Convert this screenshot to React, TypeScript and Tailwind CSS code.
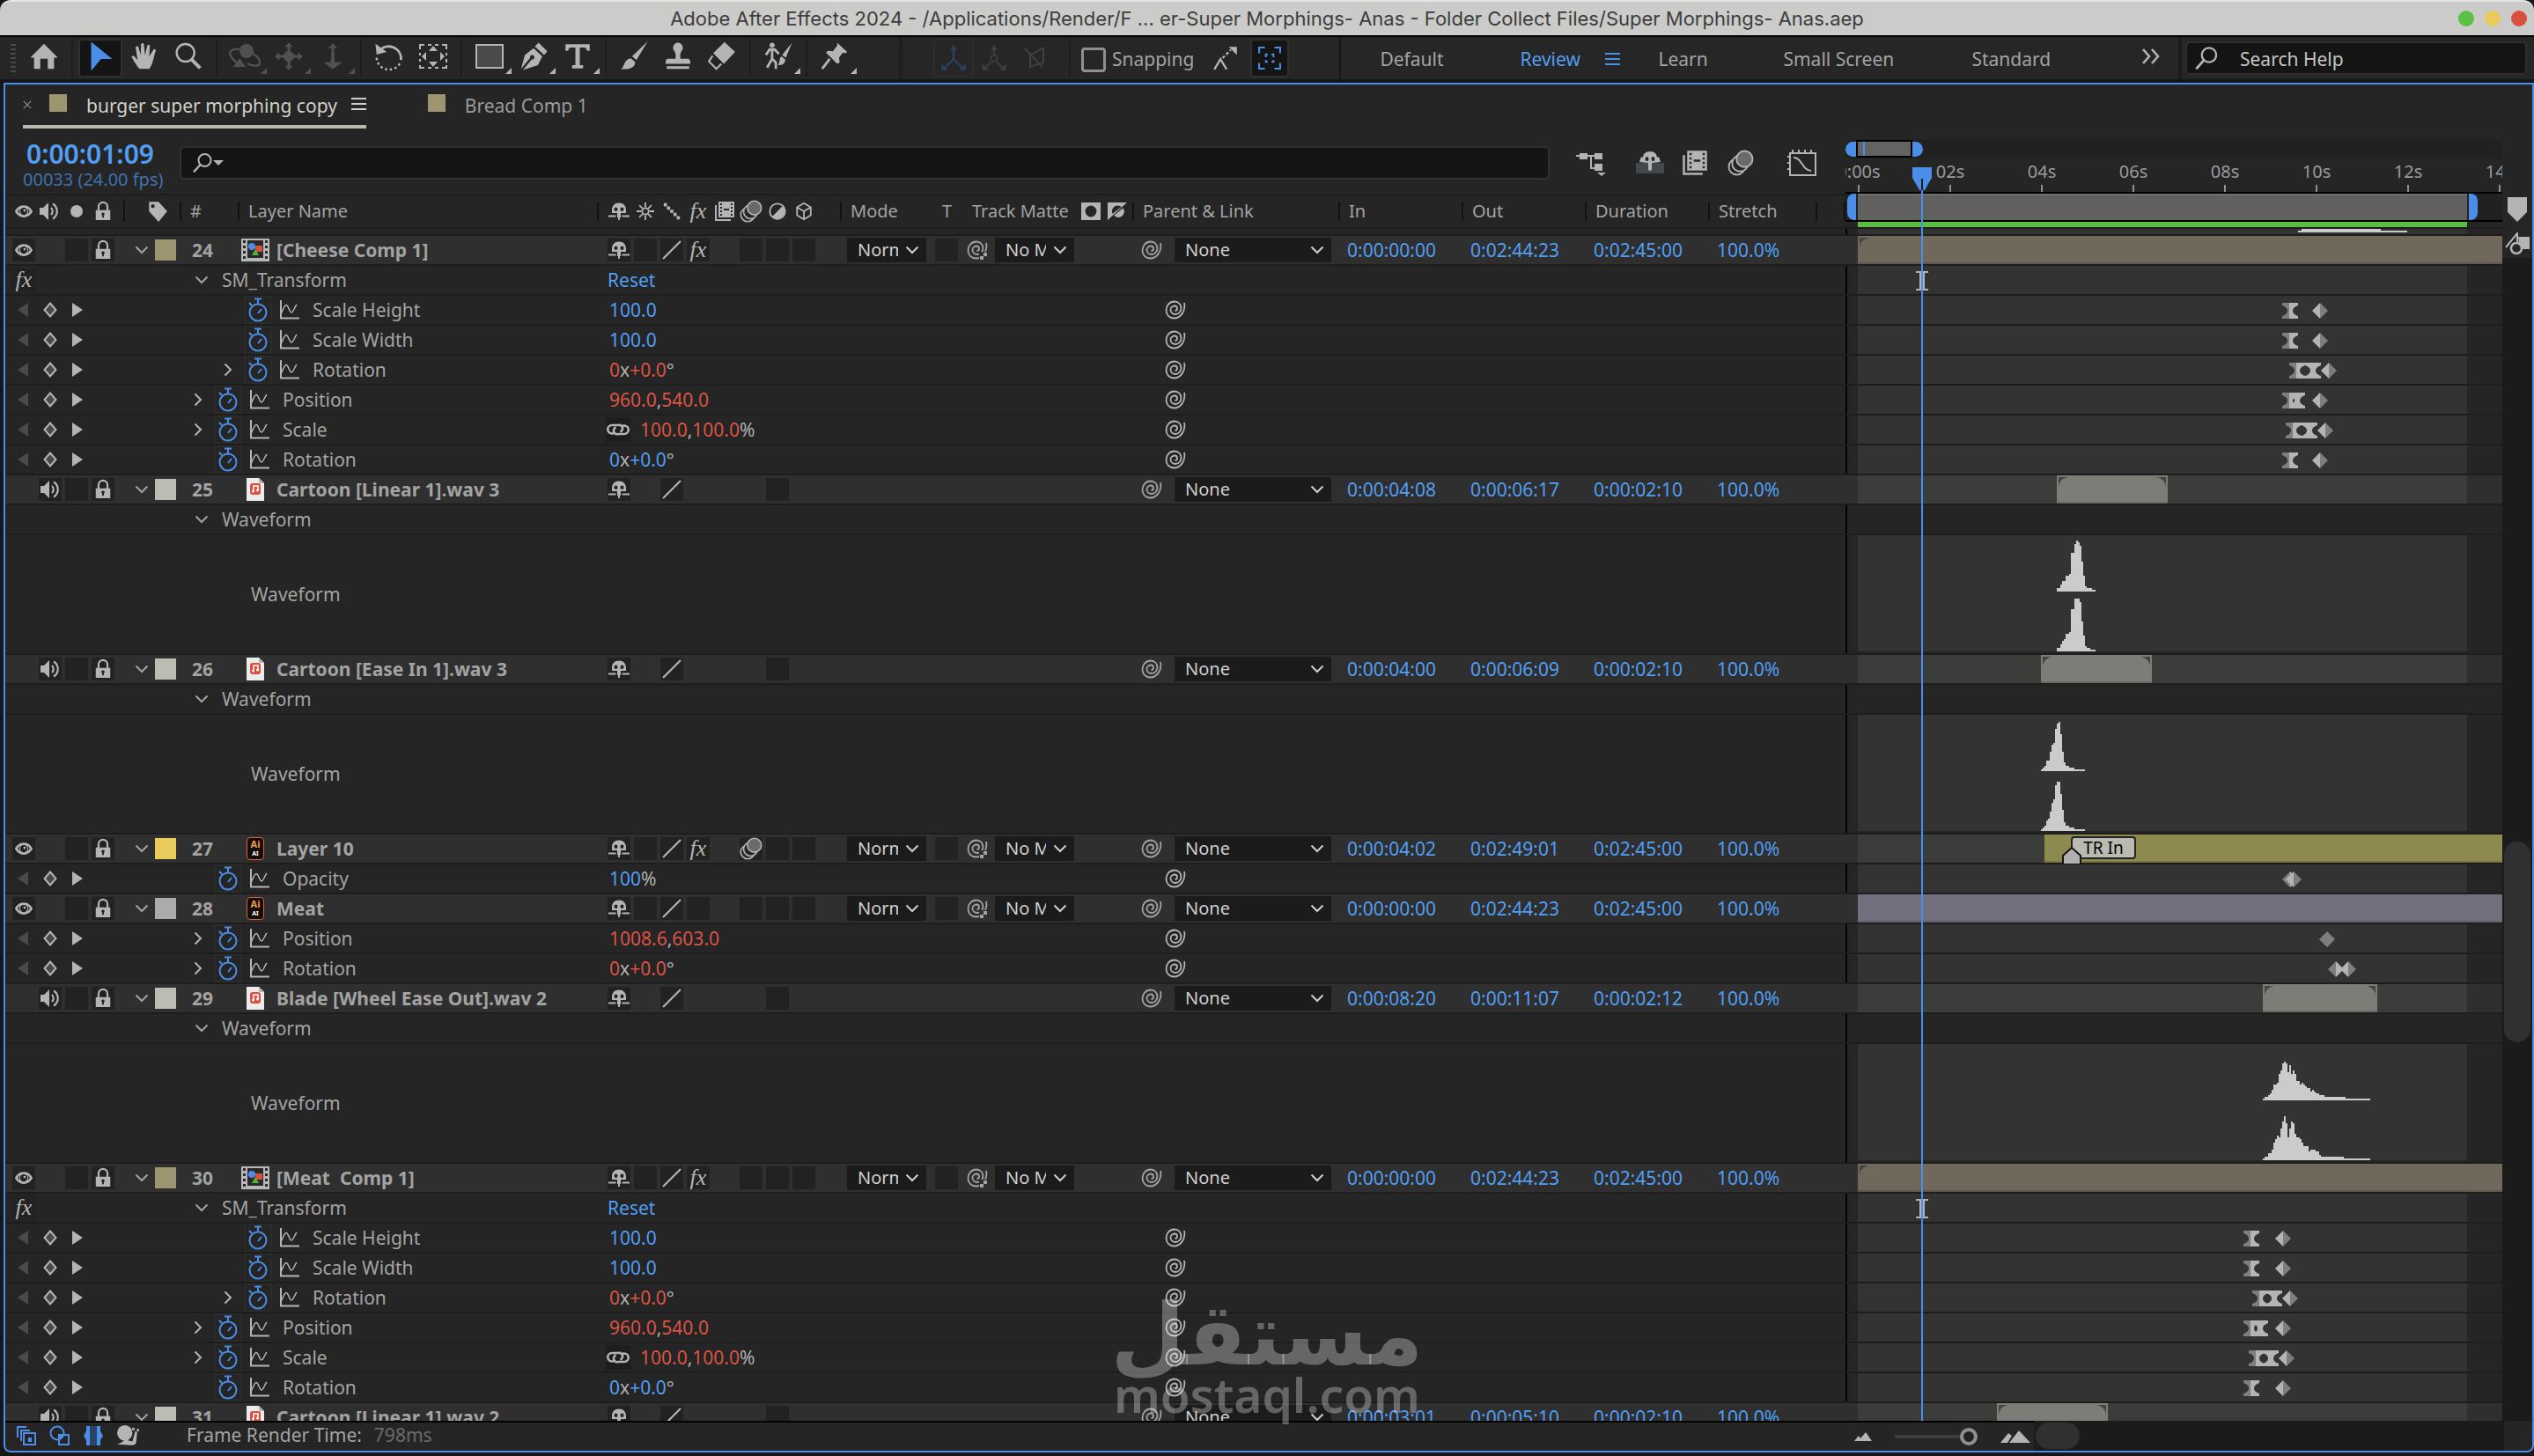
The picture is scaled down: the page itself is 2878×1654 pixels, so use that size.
import React, { useState } from "react";

type Key = { x: number; type: "glass" | "glassFull" | "in" | "out" | "dim" };

type Layer = {
  kind: "layer";
  num: number;
  name: string;
  icon: "comp" | "audio" | "ai";
  swatch: string;
  fx?: boolean;
  motion?: boolean;
  start: string;
  end: string;
  duration: string;
  bar: { x: number; w?: number; color: string; corner?: boolean };
  marker?: string;
};
type Group = { kind: "group"; name: string; reset?: boolean };
type Prop = {
  kind: "prop";
  name: string;
  deep?: boolean;
  open?: boolean;
  linked?: boolean;
  value: [string, string][];
  keys: Key[];
};
type Wave = { kind: "wave"; x: number; end: number; top: number[][]; bottom: number[][] };
type Row = Layer | Group | Prop | Wave;

const BLUE = "text-[#519ef2]";
const RED = "text-[#dc5444]";
const GREY = "text-[#b0b0b0]";

const transformProps = (glass: number, dia: number, k: number[][]): Row[] => [
  { kind: "group", name: "SM_Transform", reset: true },
  { kind: "prop", name: "Scale Height", deep: true, value: [["100.0", BLUE]], keys: [{ x: glass, type: "glass" }, { x: dia, type: "out" }] },
  { kind: "prop", name: "Scale Width", deep: true, value: [["100.0", BLUE]], keys: [{ x: glass, type: "glass" }, { x: dia, type: "out" }] },
  {
    kind: "prop",
    name: "Rotation",
    deep: true,
    open: true,
    value: [["0", RED], ["x", GREY], ["+0.0", RED], ["°", GREY]],
    keys: [{ x: k[0][0], type: "glass" }, { x: k[0][1], type: "glassFull" }, { x: k[0][2], type: "out" }],
  },
  {
    kind: "prop",
    name: "Position",
    open: true,
    value: [["960.0", RED], [",", GREY], ["540.0", RED]],
    keys: [{ x: glass, type: "glass" }, { x: k[1][0], type: "glassFull" }, { x: dia, type: "out" }],
  },
  {
    kind: "prop",
    name: "Scale",
    open: true,
    linked: true,
    value: [["100.0", RED], [",", GREY], ["100.0", RED], ["%", GREY]],
    keys: [{ x: k[2][0], type: "glass" }, { x: k[2][1], type: "glassFull" }, { x: k[2][2], type: "out" }],
  },
  {
    kind: "prop",
    name: "Rotation",
    value: [["0", BLUE], ["x", GREY], ["+0.0", BLUE], ["°", GREY]],
    keys: [{ x: glass, type: "glass" }, { x: dia, type: "out" }],
  },
];

// each pair is [x offset, peak height]
const hitA = [[0, 4], [4, 8], [6, 12], [10, 18], [14, 20], [16, 44], [20, 54], [22, 58], [24, 56], [26, 52], [28, 34], [30, 18], [32, 6], [34, 4], [40, 2]];
const hitA2 = [[0, 4], [4, 8], [6, 12], [8, 14], [10, 20], [14, 22], [16, 48], [20, 60], [26, 56], [28, 34], [30, 18], [32, 6], [34, 4], [38, 2]];
const hitB = [[0, 2], [2, 4], [4, 6], [6, 12], [10, 22], [12, 30], [14, 32], [16, 48], [18, 54], [20, 56], [22, 42], [24, 22], [26, 10], [28, 6], [32, 4], [38, 2]];
const hitB2 = [[0, 2], [2, 4], [4, 6], [6, 12], [8, 14], [10, 22], [12, 32], [14, 36], [16, 52], [18, 56], [22, 42], [24, 24], [26, 10], [28, 6], [32, 4], [38, 2]];
const blade = [[0, 2], [2, 4], [6, 6], [8, 8], [10, 12], [12, 18], [16, 20], [18, 30], [20, 34], [22, 42], [24, 44], [26, 42], [28, 32], [30, 40], [32, 30], [34, 34], [36, 30], [38, 22], [42, 18], [44, 20], [46, 18], [48, 16], [50, 14], [54, 10], [56, 12], [58, 10], [60, 8], [64, 6], [70, 4], [94, 2]];
const blade2 = [[0, 2], [2, 4], [6, 8], [10, 12], [12, 20], [14, 24], [16, 28], [18, 26], [20, 36], [22, 44], [24, 50], [26, 42], [28, 26], [30, 36], [32, 44], [34, 42], [36, 30], [38, 26], [42, 24], [44, 20], [46, 16], [52, 10], [54, 12], [60, 10], [64, 6], [66, 4], [92, 2]];

const rows: Row[] = [
  { kind: "layer", num: 24, name: "[Cheese Comp 1]", icon: "comp", swatch: "#9c9570", fx: true, start: "0:00:00:00", end: "0:02:44:23", duration: "0:02:45:00", bar: { x: 14, color: "#70685a", corner: true } },
  ...transformProps(496, 530, [[504, 522, 540], [504], [500, 518, 536]]),
  { kind: "layer", num: 25, name: "Cartoon [Linear 1].wav 3", icon: "audio", swatch: "#bbbdb3", start: "0:00:04:08", end: "0:00:06:17", duration: "0:00:02:10", bar: { x: 240, w: 126, color: "#7a7e77", corner: true } },
  { kind: "group", name: "Waveform" },
  { kind: "wave", x: 240, end: 44, top: hitA, bottom: hitA2 },
  { kind: "layer", num: 26, name: "Cartoon [Ease In 1].wav 3", icon: "audio", swatch: "#bbbdb3", start: "0:00:04:00", end: "0:00:06:09", duration: "0:00:02:10", bar: { x: 222, w: 126, color: "#7a7e77", corner: true } },
  { kind: "group", name: "Waveform" },
  { kind: "wave", x: 222, end: 50, top: hitB, bottom: hitB2 },
  { kind: "layer", num: 27, name: "Layer 10", icon: "ai", swatch: "#e8cb5a", fx: true, motion: true, start: "0:00:04:02", end: "0:02:49:01", duration: "0:02:45:00", bar: { x: 226, color: "#8e894f" }, marker: "TR In" },
  { kind: "prop", name: "Opacity", value: [["100", BLUE], ["%", GREY]], keys: [{ x: 496, type: "in" }, { x: 500, type: "out" }] },
  { kind: "layer", num: 28, name: "Meat", icon: "ai", swatch: "#ababab", start: "0:00:00:00", end: "0:02:44:23", duration: "0:02:45:00", bar: { x: 14, color: "#72707f" } },
  { kind: "prop", name: "Position", open: true, value: [["1008.6", RED], [",", GREY], ["603.0", RED]], keys: [{ x: 538, type: "dim" }] },
  { kind: "prop", name: "Rotation", open: true, value: [["0", RED], ["x", GREY], ["+0.0", RED], ["°", GREY]], keys: [{ x: 548, type: "in" }, { x: 562, type: "out" }] },
  { kind: "layer", num: 29, name: "Blade [Wheel Ease Out].wav 2", icon: "audio", swatch: "#bbbdb3", start: "0:00:08:20", end: "0:00:11:07", duration: "0:00:02:12", bar: { x: 474, w: 130, color: "#7a7e77", corner: true } },
  { kind: "group", name: "Waveform" },
  { kind: "wave", x: 474, end: 122, top: blade, bottom: blade2 },
  { kind: "layer", num: 30, name: "[Meat  Comp 1]", icon: "comp", swatch: "#9c9570", fx: true, start: "0:00:00:00", end: "0:02:44:23", duration: "0:02:45:00", bar: { x: 14, color: "#70685a", corner: true } },
  ...transformProps(452, 488, [[462, 478, 496], [462], [458, 474, 492]]),
  { kind: "layer", num: 31, name: "Cartoon [Linear 1].wav 2", icon: "audio", swatch: "#bbbdb3", start: "0:00:03:01", end: "0:00:05:10", duration: "0:00:02:10", bar: { x: 172, w: 126, color: "#7a7e77", corner: true } },
];

/* ---------- icons ---------- */

const Svg = ({ w = 24, h, box = "0 0 24 24", children }: { w?: number; h?: number; box?: string; children: React.ReactNode }) => (
  <svg width={w} height={h ?? w} viewBox={box} fill="currentColor" className="shrink-0" aria-hidden="true">
    {children}
  </svg>
);

const Eye = () => (
  <Svg w={22}>
    <path fillRule="evenodd" d="M12 4.500C6.500 4.500 2.500 8.500 1 12c1.500 3.500 5.500 7.500 11 7.500s9.500-4 11-7.500c-1.500-3.500-5.500-7.500-11-7.500zM12 7.500a4.500 4.500 0 1 1 0 9 4.500 4.500 0 0 1 0-9zM4.500 12c.6-1.400 1.500-2.600 2.700-3.500a7 7 0 0 0 0 7C6 14.600 5.100 13.400 4.500 12zm15 0c-.6 1.400-1.500 2.600-2.700 3.500a7 7 0 0 0 0-7c1.200.9 2.100 2.100 2.700 3.500z" />
    <circle cx="13" cy="11" r="1.500" />
  </Svg>
);
const Speaker = () => (
  <Svg w={24}>
    <path d="M1 8h4l6-6v20l-6-6H1z" />
    <path d="M14 8a5.500 5.500 0 0 1 0 8M16 3.500a10 10 0 0 1 0 17" fill="none" stroke="currentColor" strokeWidth="2.200" />
  </Svg>
);
const Lock = () => (
  <Svg w={22} h={24}>
    <path d="M6.500 11V6.500a5.500 5.500 0 0 1 11 0V11" fill="none" stroke="currentColor" strokeWidth="2.400" />
    <path fillRule="evenodd" d="M3 10.500h18V23H3zM12 13.500a2 2 0 0 0-1 3.700V20h2v-2.800a2 2 0 0 0-1-3.700z" />
  </Svg>
);
const Shy = () => (
  <Svg w={24}>
    <path fillRule="evenodd" d="M12 2.500c5 0 8 3.500 8 8V14h-6v5h-4v-5H4v-3.500c0-4.500 3-8 8-8zM8.500 7.500a2 2.300 0 1 0 0 4.600 2 2.300 0 0 0 0-4.600zm7 0a2 2.300 0 1 0 0 4.600 2 2.300 0 0 0 0-4.600z" />
    <path d="M0 16.500h8.500v2H0zM15.500 16.500H24v2h-8.500zM11 17h2v5h-2z" />
  </Svg>
);
const Sun = () => (
  <Svg w={22}>
    <g fill="none" stroke="currentColor" strokeWidth="2">
      <circle cx="12" cy="12" r="4" />
      <path d="M12 1v6M12 17v6M1 12h6M17 12h6M4.500 4.500l4 4M15.500 15.500l4 4M4.500 19.500l4-4M15.500 8.500l4-4" />
    </g>
  </Svg>
);
const Slash = () => (
  <Svg w={24}>
    <path d="M2 22L22 2" stroke="currentColor" strokeWidth="2.200" />
  </Svg>
);
const Stairs = () => (
  <Svg w={22}>
    <path d="M2 2h4v4H2zM6 6h4v4H6zM10 10h4v4h-4zM14 14h4v4h-4zM18 18h4v4h-4z" />
  </Svg>
);
const Fx = () => <span className="font-['Liberation_Serif',serif] text-[26px] leading-[28px] italic">fx</span>;
const Film = ({ w = 24 }: { w?: number }) => (
  <Svg w={w}>
    <path fillRule="evenodd" d="M5 1h18v18H5zM7 3v2h2V3zm0 4v2h2V7zm0 4v2h2v-2zm0 4v2h2v-2zM19 3v2h2V3zm0 4v2h2V7zm0 4v2h2v-2zm0 4v2h2v-2zM11 9v2h6V9z" />
    <path d="M1 5h2v16h16v2H1z" />
  </Svg>
);
const Motion = ({ w = 26 }: { w?: number }) => (
  <Svg w={w}>
    <g stroke="currentColor" strokeWidth="1.500" fill="#252525">
      <circle cx="8.500" cy="15.500" r="7.300" />
      <circle cx="11.500" cy="12.500" r="7.300" />
      <circle cx="15.500" cy="8.500" r="7.300" fill="#6a6a6a" />
    </g>
  </Svg>
);
const Half = () => (
  <Svg w={22}>
    <circle cx="12" cy="12" r="9.500" fill="none" stroke="currentColor" strokeWidth="2" />
    <path d="M18.700 5.300A9.500 9.500 0 0 1 5.300 18.700z" />
  </Svg>
);
const Cube = () => (
  <Svg w={22}>
    <path d="M12 2l8.500 5v10L12 22l-8.500-5V7zM3.500 7l8.500 5 8.500-5M12 12v10" fill="none" stroke="currentColor" strokeWidth="2" />
  </Svg>
);
const Spiral = ({ matte }: { matte?: boolean }) => (
  <Svg w={24} h={22} box="0 0 24 22">
    <path
      d="M22 3C24 12 18 20.500 10.500 20.500 5 20.500 1.500 16.500 1.500 11.500 1.500 6 5.500 1.500 11 1.500 15.500 1.500 18.500 5 18.500 9 18.500 13 15.500 16 12 16 9 16 6.500 14 6.500 11 6.500 8.500 8.500 6.500 11 6.500 13 6.500 14 8 14 9.500 14 11 13 12 11.500 12"
      fill="none"
      stroke="currentColor"
      strokeWidth="1.800"
    />
    {matte && <path d="M14 13h10v9H14z" fill="#2f2f2f" />}
    {matte && <path d="M19 14h4v4h-4zM15 18h4v4h-4z" />}
  </Svg>
);
const Stopwatch = () => (
  <Svg w={26} h={28} box="0 0 26 28">
    <g fill="none" stroke="#4a8ee8" strokeWidth="2">
      <circle cx="13" cy="17" r="9.500" />
      <path d="M9 1.500h8M13 2v5M3 6l3 3M13 18l4-5" />
    </g>
  </Svg>
);
const Graph = () => (
  <Svg w={24}>
    <path d="M2 1v20.500h21" fill="none" stroke="currentColor" strokeWidth="2" />
    <path d="M2 17C5 10 7 5 9 7s3 8 5 8 4-7 6-9" fill="none" stroke="currentColor" strokeWidth="1.500" />
  </Svg>
);
const Down = () => (
  <Svg w={16} h={10} box="0 0 16 10">
    <path d="M1.500 1.500L8 8l6.500-6.500" fill="none" stroke="currentColor" strokeWidth="2" />
  </Svg>
);
const Right = () => (
  <Svg w={10} h={16} box="0 0 10 16">
    <path d="M1.500 1.500L8 8l-6.500 6.500" fill="none" stroke="currentColor" strokeWidth="2" />
  </Svg>
);
const Link = () => (
  <Svg w={26} h={16} box="0 0 26 16">
    <path d="M8 12.500H6A4.500 4.500 0 0 1 6 3h6.500a4 4 0 0 1 3 7.500M18 3.500h2a4.500 4.500 0 0 1 0 9.500h-6.500a4 4 0 0 1-3-7.500" fill="none" stroke="currentColor" strokeWidth="2.600" />
  </Svg>
);
const Magnifier = ({ w = 28 }: { w?: number }) => (
  <Svg w={w}>
    <circle cx="14.500" cy="9" r="7" fill="none" stroke="currentColor" strokeWidth="2" />
    <path d="M9.500 14L2 22.500" stroke="currentColor" strokeWidth="2.400" />
  </Svg>
);
const Bars = () => (
  <Svg w={17} h={16} box="0 0 17 16">
    <path d="M0 0h17v2H0zM0 6h17v2H0zM0 12h17v2H0z" />
  </Svg>
);

const LayerIcon = ({ type }: { type: Layer["icon"] }) => {
  if (type === "comp")
    return (
      <Svg w={32} h={26} box="0 0 32 26">
        <path d="M0 0h32v26H0z" fill="#b8b8b8" />
        <path d="M2 2h3v3H2zM2 8h3v3H2zM2 14h3v3H2zM2 20h3v3H2zM27 2h3v3h-3zM27 8h3v3h-3zM27 14h3v3h-3zM27 20h3v3h-3zM7 2h18v20H7z" fill="#2a2a2a" />
        <circle cx="12" cy="9" r="4" fill="#4a8ee8" />
        <path d="M16 8h8v7h-8z" fill="#d9503f" />
        <path d="M12 19l4-7 4 7z" fill="#52b53e" />
      </Svg>
    );
  if (type === "audio")
    return (
      <Svg w={32} h={26} box="0 0 32 26">
        <path d="M6 0h14l6 6v20H6z" fill="#ececec" />
        <path d="M20 0l6 6h-6z" fill="#b5b5b5" />
        <rect x="10" y="6" width="12" height="13" rx="3" fill="#d9503f" />
        <path d="M14 15V9h5v5" fill="none" stroke="#fff" strokeWidth="1.500" />
        <circle cx="13.500" cy="15" r="1.500" fill="#fff" />
        <circle cx="18.500" cy="14" r="1.500" fill="#fff" />
      </Svg>
    );
  return (
    <span className="mx-[6px] flex h-[26px] w-5 flex-col items-center rounded-sm border border-[#d9603f] bg-[#160d08] text-[11px] leading-[14px] font-bold text-[#f0a04a]">
      Ai<span className="text-[7px] leading-[8px] text-white">AI</span>
    </span>
  );
};

const Keyframe = ({ k }: { k: Key }) => {
  const L = "#b4b4b4";
  const D = "#7d7f7d";
  const left = k.type === "out" || k.type === "glassFull" ? L : D;
  const right = k.type === "in" || k.type === "glass" || k.type === "glassFull" ? L : D;
  const glass = k.type === "glass" || k.type === "glassFull";
  return (
    <svg width="18" height="18" viewBox="0 0 18 18" className="absolute top-2" style={{ left: k.x }} aria-hidden="true">
      <path fill={left} d={glass ? "M0 0h9v18H0v-3Q6 13 6 9T0 3z" : "M9 0v18L0 9z"} />
      <path fill={right} d={glass ? "M18 0H8v18h10v-3Q12 13 12 9T18 3z" : "M9 0v18l9-9z"} />
    </svg>
  );
};

const steps = (data: number[][], end: number, base: number) =>
  `M0 ${base}` + data.map(([x, h], i) => `H${x}V${base - h}${i === data.length - 1 ? `H${end}` : ""}`).join("") + `V${base}z`;

/* ---------- toolbar ---------- */

const tools: { label: string; icon: React.ReactNode; active?: boolean; dim?: boolean; more?: boolean }[][] = [
  [{ label: "Home", icon: <Svg w={34}><path d="M12 2l11 11h-3v9h-5v-8H9v8H4v-9H1z" /></Svg> }],
  [
    { label: "Selection tool", active: true, icon: <Svg w={36}><path d="M5 1l16 13h-8.500L5 23z" fill="#4a8ee8" /></Svg> },
    {
      label: "Hand tool",
      icon: (
        <Svg w={34}>
          <path d="M8 22c-2-2-4-6-6-9-.7-1.300 1-2.200 2-1l2.500 3L5 5c0-1.500 2-1.600 2.300-.2L9 11l.3-8.500c.1-1.500 2.200-1.500 2.300 0L12.500 11l1.800-7.500c.4-1.400 2.300-1 2.100.5L15.800 12l3.300-5.200c.8-1.200 2.400-.3 1.900 1C19.500 12 19 18 16 22z" />
        </Svg>
      ),
    },
    { label: "Zoom tool", icon: <Svg w={32}><circle cx="9.500" cy="9" r="7.500" fill="none" stroke="currentColor" strokeWidth="1.800" /><path d="M14.500 14.500L22 22" stroke="currentColor" strokeWidth="3" /></Svg> },
  ],
  [
    {
      label: "Orbit camera",
      dim: true,
      more: true,
      icon: (
        <Svg w={36} h={30} box="0 0 36 30">
          <circle cx="20" cy="9" r="8" />
          <path d="M12 7C4 6 0 9 1.500 13.500 3 17 6 20 10 23M27 12c6 3 9 8 8 11-1 4-9 3-14 0" fill="none" stroke="currentColor" strokeWidth="2.500" />
          <path d="M12 17l7 10H5z" />
        </Svg>
      ),
    },
    {
      label: "Pan camera",
      dim: true,
      more: true,
      icon: (
        <Svg w={32}>
          <circle cx="12" cy="12" r="4.500" />
          <path d="M12 0l3.500 4h-2.300v16h2.300L12 24l-3.500-4h2.300V4H8.500zM0 12l4-3.500v2.300h16V8.500l4 3.500-4 3.500v-2.300H4v2.300z" />
        </Svg>
      ),
    },
    { label: "Dolly camera", dim: true, more: true, icon: <Svg w={32}><path d="M12 1l4 4h-3l.7 12H20l-8 6-8-6h6.300L11 5H8z" /></Svg> },
  ],
  [
    {
      label: "Rotation tool",
      icon: (
        <Svg w={34}>
          <path d="M5 6.500A10 10 0 0 1 21.500 15" fill="none" stroke="currentColor" strokeWidth="2" />
          <path d="M20 18.500A10 10 0 0 1 2 14" fill="none" stroke="currentColor" strokeWidth="2" strokeLinecap="round" strokeDasharray="0.100 3.800" />
          <path d="M1 2l1 8.500 8-2z" />
        </Svg>
      ),
    },
    {
      label: "Anchor point tool",
      icon: (
        <Svg w={32} h={28} box="0 0 32 28">
          <path d="M1 6V1h5M10 1h4M18 1h4M26 1h5v5M31 10v3M31 17v4M31 24v3h-5M22 27h-4M14 27h-4M6 27H1v-3M1 20v-3M1 13v-3" fill="none" stroke="currentColor" strokeWidth="2" />
          <path d="M16 2l5 6H11zM16 26l5-6H11zM3 14l5-5v10zM29 14l-5-5v10z" />
        </Svg>
      ),
    },
  ],
  [
    { label: "Rectangle tool", more: true, icon: <Svg w={32} h={28} box="0 0 32 28"><path d="M1 1h30v26H1z" fill="#4a4a4a" stroke="currentColor" strokeWidth="2" /></Svg> },
    { label: "Pen tool", more: true, icon: <Svg w={34}><path fillRule="evenodd" d="M16 1l7 7-2.500 3-7.500-7zM12 5.500l7 6.500-3.500 7L3.500 23l7-8.500a1.800 1.800 0 1 0-1.300-1.200L2 22 5 11z" /></Svg> },
    { label: "Type tool", more: true, icon: <Svg w={30}><path d="M1 1h22v6h-2.500q0-3-3-3H14v16h3v3H7v-3h3V4H6.500q-3 0-3 3H1z" /></Svg> },
  ],
  [
    { label: "Brush tool", icon: <Svg w={34}><path d="M23 0L14 15l-3.500-3zM9.500 13.500l3.500 3c0 4-4 6.500-11.500 5.500 3-1 2-7.500 8-8.500z" /></Svg> },
    { label: "Clone stamp tool", icon: <Svg w={34}><path d="M12 1a4 4 0 0 1 3 6.500c-1 1.500-1.500 3-1 6.500h6q2 0 2 4H2q0-4 2-4h6c.5-3.500 0-5-1-6.500A4 4 0 0 1 12 1zM3 20h18v2H3z" /></Svg> },
    { label: "Eraser tool", icon: <Svg w={34}><path d="M14 0.500l8.500 8-9 9.500L5 9.500z" /><path d="M4.500 11.500L1.500 16l6 6 4-4" fill="none" stroke="currentColor" strokeWidth="1.500" /></Svg> },
  ],
  [{ label: "Roto brush tool", more: true, icon: <Svg w={34}><circle cx="7" cy="3" r="2" /><path d="M2 11l3-4.500h4l3.500 3.500M7 7v7l-4 7M7 14l3 3v5" fill="none" stroke="currentColor" strokeWidth="2" /><path d="M23 1l-5 12-3-2zM14.500 12l3 2.500c0 3-2 5-6 4.500 2-1 1-6 3-7z" /></Svg> }],
  [{ label: "Puppet pin tool", more: true, icon: <Svg w={34}><path d="M14 1l8 7.500-1.500 1-2-.5-3 4 .5 4-2 1-9-9 1.500-1.500 4 .5 3.500-4.500z" /><path d="M8 14l-6 8" stroke="currentColor" strokeWidth="2" /></Svg> }],
];

const Divider = () => <span className="h-[42px] w-[2px] shrink-0 bg-[#1d1d1d]" />;

const Toolbar = () => {
  const [snapping, setSnapping] = useState(false);
  return (
    <div className="flex h-12 shrink-0 items-center bg-[#262626] pl-3 text-[21px] text-[#a3a3a3]">
      <span className="mr-[7px] flex w-[6px] flex-col gap-[3px]">
        {[0, 1, 2, 3, 4, 5, 6].map((i) => (
          <i key={i} className="h-[2px] bg-[#4a4a4a]" />
        ))}
      </span>
      {tools.map((group, gi) => (
        <div key={gi} className="flex items-center">
          {gi > 0 && (
            <span className="mx-[6px] flex">
              <Divider />
            </span>
          )}
          {group.map((t) => (
            <button
              key={t.label}
              aria-label={t.label}
              className={`relative flex h-[44px] w-[50px] items-center justify-center ${t.dim ? "text-[#505050]" : "text-[#b4b4b4]"} ${
                t.active ? "rounded-sm border-2 border-[#303030] bg-[#141414]" : ""
              }`}
            >
              <span className="mb-1 flex">{t.icon}</span>
              {t.more && (
                <svg width="7" height="7" className="absolute right-0 bottom-1" fill="currentColor" aria-hidden="true">
                  <path d="M7 0v7H0z" />
                </svg>
              )}
            </button>
          ))}
        </div>
      ))}
      <span className="ml-12 h-12 w-1 bg-[#1f1f1f]" />
      <div className="ml-[35px] flex">
        {["Local axis", "World axis", "View axis"].map((label, i) => (
          <button key={label} aria-label={label} className={`flex h-[44px] w-[46px] items-center justify-center ${i === 0 ? "rounded-sm border-2 border-[#2c2c2c] text-[#2b4260]" : "text-[#3e3e3e]"}`}>
            <Svg w={30}>
              <path d={i === 2 ? "M3 3l16 17M8 9l12-6v13l-12 4z" : "M12 3v10M12 13l-8 8M12 13l8 8"} fill="none" stroke="currentColor" strokeWidth="1.800" />
              {i < 2 && <path d="M12 0l3 5H9zM1 23v-6l6 6zM23 23v-6l-6 6z" />}
              {i === 1 && <circle cx="12" cy="12" r="3" fill="#262626" stroke="currentColor" strokeWidth="1.500" />}
            </Svg>
          </button>
        ))}
      </div>
      <span className="mr-3 ml-4 flex">
        <Divider />
      </span>
      <label className="flex items-center gap-[7px] pt-1">
        <input
          type="checkbox"
          checked={snapping}
          onChange={() => setSnapping(!snapping)}
          className="h-7 w-7 appearance-none rounded-sm border-[3px] border-[#8f8f8f] checked:bg-[#4a8ee8]"
        />
        Snapping
      </label>
      <button aria-label="Snap to edges" className="ml-4 flex h-[44px] w-10 items-center justify-center text-[#b4b4b4]">
        <Svg w={28}>
          <path d="M1 23l6-10 6 10" fill="none" stroke="currentColor" strokeWidth="2" />
          <path d="M9 12l8-8" stroke="currentColor" strokeWidth="2" strokeDasharray="3 2" />
          <path d="M15 1h8v8z" />
        </Svg>
      </button>
      <button aria-label="Snap to features" className="ml-2 flex h-[44px] w-[44px] items-center justify-center rounded-sm border-2 border-[#303030] bg-[#141414] text-[#4a8ee8]">
        <Svg w={26}>
          <path d="M1 7V1h6M17 1h6v6M23 17v6h-6M7 23H1v-6M8 11V8h2M14 8h2v3M16 14v2h-2M10 16H8v-2" fill="none" stroke="currentColor" strokeWidth="1.900" />
        </Svg>
      </button>
      <span className="ml-[57px] h-12 w-[2px] bg-[#161616]" />
      <nav className="flex grow items-center pt-1">
        <button className="ml-11 w-[159px] text-left">Default</button>
        <button className="w-[97px] text-left text-[#519ef2]">Review</button>
        <button aria-label="Workspace menu" className="w-[60px] text-[#4a8ee8]">
          <Bars />
        </button>
        <button className="w-[142px] text-left">Learn</button>
        <button className="w-[214px] text-left">Small Screen</button>
        <button className="w-[193px] text-left">Standard</button>
        <button aria-label="More workspaces" className="mb-2 text-[#b4b4b4]">
          <Svg w={22} h={18} box="0 0 22 18">
            <path d="M2 1l7 8-7 8M12 1l7 8-7 8" fill="none" stroke="currentColor" strokeWidth="2.600" />
          </Svg>
        </button>
      </nav>
      <span className="h-12 w-1 bg-[#1b1b1b]" />
      <label className="mr-2 ml-1 flex h-[38px] w-[388px] items-center gap-6 rounded-md border-2 border-[#2e2e2e] bg-[#141414] pl-2 text-[#b4b4b4]">
        <Magnifier />
        <input aria-label="Search Help" placeholder="Search Help" className="w-full bg-transparent pt-1 outline-none placeholder:text-[#c4c4c4]" />
      </label>
    </div>
  );
};

/* ---------- layer table ---------- */

const Box = ({ empty, children }: { empty?: boolean; children?: React.ReactNode }) => (
  <span className={`flex h-[26px] w-[26px] shrink-0 items-center justify-center ${empty ? "" : "bg-[#222222]"}`}>{children}</span>
);

const Drop = ({ label, wide, options }: { label: string; wide?: boolean; options: string[] }) => (
  <span className={`relative flex h-7 shrink-0 items-center text-[20px] text-[#cfcfcf] ${wide ? "w-[178px]" : "w-[90px]"}`}>
    <select aria-label={label} className="h-7 w-full appearance-none overflow-hidden bg-[#1b1b1b] pr-8 pl-3 leading-7 outline-none">
      {options.map((o) => (
        <option key={o}>{o}</option>
      ))}
    </select>
    <span className="pointer-events-none absolute right-2">
      <Down />
    </span>
  </span>
);

const td = "h-[34px] border-b-2 border-[#1d1d1d] p-0 whitespace-nowrap";

const LayerRow = ({ r }: { r: Layer }) => {
  const audio = r.icon === "audio";
  return (
    <tr className="bg-[#2f2f2f]">
      <td className={td}>
        <div className="flex gap-1 pl-2 text-[#b4b4b4]">
          <Box empty={audio}>{!audio && <Eye />}</Box>
          <Box empty={!audio}>{audio && <Speaker />}</Box>
          <Box />
          <Box>
            <Lock />
          </Box>
        </div>
      </td>
      <td className={td}>
        <div className="flex items-center gap-[7px] pl-[11px]">
          <button aria-label={`Collapse layer ${r.num}`}>
            <Down />
          </button>
          <span className="h-6 w-6" style={{ background: r.swatch }} />
        </div>
      </td>
      <td className={`${td} pl-3 font-bold`}>{r.num}</td>
      <td className={td}>
        <div className="flex items-center gap-2 pl-[2px]">
          <LayerIcon type={r.icon} />
          <span className="font-bold whitespace-pre">{r.name}</span>
        </div>
      </td>
      <td className={td}>
        <div className="flex gap-1 pl-[10px] text-[#b4b4b4]">
          <Box>
            <Shy />
          </Box>
          <Box empty={audio} />
          <Box>
            <Slash />
          </Box>
          <Box empty={audio}>{r.fx && <Fx />}</Box>
          <Box empty />
          <Box empty={audio}>{r.motion && <Motion />}</Box>
          <Box />
          <Box empty={audio} />
        </div>
      </td>
      <td className={td}>
        <div className="pl-[6px]">{!audio && <Drop label="Mode" options={["Normal", "Multiply", "Screen"]} />}</div>
      </td>
      <td className={td}>
        <div className="pl-[2px]">{!audio && <Box />}</div>
      </td>
      <td className={td}>
        {!audio && (
          <div className="flex items-center gap-2 pl-[6px]">
            <Spiral matte />
            <Drop label="Track Matte" options={["No Matte"]} />
          </div>
        )}
      </td>
      <td className={td}>
        <div className="flex items-center gap-[14px] pl-2">
          <Spiral />
          <Drop label="Parent & Link" wide options={["None"]} />
        </div>
      </td>
      <td className={`${td} pl-2 ${BLUE}`}>{r.start}</td>
      <td className={`${td} pl-2 ${BLUE}`}>{r.end}</td>
      <td className={`${td} pl-2 ${BLUE}`}>{r.duration}</td>
      <td className={`${td} pl-2 ${BLUE}`}>100.0%</td>
      <td className={td} />
    </tr>
  );
};

const GroupRow = ({ r }: { r: Group }) => (
  <tr>
    <td className={td}>
      {r.reset && (
        <div className="pl-2 text-[#b4b4b4]">
          <Box>
            <Fx />
          </Box>
        </div>
      )}
    </td>
    <td className={td} colSpan={3}>
      <div className="flex items-center gap-[15px] pl-[79px]">
        <button aria-label={`Collapse ${r.name}`}>
          <Down />
        </button>
        {r.name}
      </div>
    </td>
    <td className={td} colSpan={10}>
      {r.reset && <button className="pl-[10px] text-[#519ef2]">Reset</button>}
    </td>
  </tr>
);

const PropRow = ({ r }: { r: Prop }) => (
  <tr>
    <td className={td}>
      <div className="flex items-center gap-[17px] pl-[14px] text-[#b4b4b4]">
        <button aria-label="Previous keyframe" className="text-[#4a4a4a]">
          <Svg w={12} h={16} box="0 0 12 16">
            <path d="M12 0v16L0 8z" />
          </Svg>
        </button>
        <button aria-label="Toggle keyframe">
          <Svg w={16} h={18} box="0 0 16 18">
            <path d="M8 1.500L14.500 9 8 16.500 1.500 9z" fill="#4a4a4a" stroke="currentColor" strokeWidth="2" />
          </Svg>
        </button>
        <button aria-label="Next keyframe">
          <Svg w={12} h={16} box="0 0 12 16">
            <path d="M0 0v16l12-8z" />
          </Svg>
        </button>
      </div>
    </td>
    <td className={td} colSpan={3}>
      <div className={`flex items-center ${r.deep ? "pl-[107px]" : "pl-[73px]"}`}>
        <span className="mr-2 flex w-5 justify-center text-[#b4b4b4]">{r.open && <Right />}</span>
        <button aria-label={`Animate ${r.name}`} className="mr-2 flex h-8 w-8 items-center justify-center border-2 border-[#2b2b2b]">
          <Stopwatch />
        </button>
        <span className="mr-[14px] flex text-[#b4b4b4]">
          <Graph />
        </span>
        {r.name}
      </div>
    </td>
    <td className={td} colSpan={4}>
      <div className={`flex items-center ${r.linked ? "pl-2" : "pl-3"}`}>
        {r.linked && (
          <button aria-label="Constrain proportions" className="mr-[11px] flex h-7 w-7 items-center justify-center bg-[#1d1d1d] text-[#b4b4b4]">
            <Link />
          </button>
        )}
        {r.value.map(([text, color], i) => (
          <span key={i} className={color}>
            {text}
          </span>
        ))}
      </div>
    </td>
    <td className={td} colSpan={6}>
      <div className="pl-[35px] text-[#b4b4b4]">
        <Spiral />
      </div>
    </td>
  </tr>
);

const WaveRow = () => (
  <tr>
    <td className="h-[136px] border-b-2 border-[#1d1d1d] p-0" />
    <td className="h-[136px] border-b-2 border-[#1d1d1d] p-0 pl-[143px]" colSpan={13}>
      Waveform
    </td>
  </tr>
);

const Th = ({ children }: { children?: React.ReactNode }) => (
  <th className="h-10 border-y-2 border-[#1d1d1d] p-0 text-left font-normal">
    <div className="flex h-[22px] items-center border-r-2 border-[#121212] pl-[10px] whitespace-nowrap">{children}</div>
  </th>
);

const LayerTable = () => (
  <table className="w-full table-fixed border-separate border-spacing-0 text-[21px] leading-[28px] text-[#a3a3a3]">
    <colgroup>
      <col className="w-[136px]" />
      <col className="w-[64px]" />
      <col className="w-[66px]" />
      <col className="w-[408px]" />
      <col className="w-[276px]" />
      <col className="w-[104px]" />
      <col className="w-[32px]" />
      <col className="w-[196px]" />
      <col className="w-[234px]" />
      <col className="w-[140px]" />
      <col className="w-[140px]" />
      <col className="w-[140px]" />
      <col className="w-[122px]" />
      <col />
    </colgroup>
    <thead className="text-[20px]">
      <tr>
        <th className="h-10 border-y-2 border-[#1d1d1d] p-0">
          <div className="flex items-center gap-[6px] border-r-2 border-[#121212] pl-[10px] text-[#b4b4b4]">
            <Eye />
            <Speaker />
            <span className="mx-[6px] h-[14px] w-[14px] rounded-full bg-[#b4b4b4]" />
            <Lock />
          </div>
        </th>
        <Th>
          <span className="flex pl-[14px] text-[#b4b4b4]">
            <Svg w={26}>
              <path fillRule="evenodd" d="M3 2h10l9 10-9 11L3 12zM7 4.500a2 2 0 1 0 0 4 2 2 0 0 0 0-4z" />
            </Svg>
          </span>
        </Th>
        <Th>#</Th>
        <Th>Layer Name</Th>
        <th className="h-10 border-y-2 border-[#1d1d1d] p-0 font-normal">
          <div className="flex h-[22px] items-center gap-1 border-r-2 border-[#121212] pl-[10px] text-[#b4b4b4]">
            {[<Shy />, <Sun />, <Stairs />, <Fx />, <Film />, <Motion />, <Half />, <Cube />].map((icon, i) => (
              <span key={i} className="flex w-[26px] shrink-0 justify-center">
                {icon}
              </span>
            ))}
          </div>
        </th>
        <th className="h-10 border-y-2 border-[#1d1d1d] p-0 pl-[10px] text-left font-normal">Mode</th>
        <th className="h-10 border-y-2 border-[#1d1d1d] p-0 pl-[10px] text-left font-normal">T</th>
        <Th>
          <span className="flex w-full items-center pr-[6px] pl-[2px]">
            Track Matte
            <span className="ml-auto flex gap-2 text-[#b4b4b4]">
              <Svg w={22}>
                <path fillRule="evenodd" d="M0 1h24v22H0zM12 5a7 7 0 1 0 0 14 7 7 0 0 0 0-14z" />
              </Svg>
              <Svg w={22}>
                <path fillRule="evenodd" d="M0 1h24L0 23zM12 5a7 7 0 0 0-6 10L17 6.500A7 7 0 0 0 12 5z" />
                <path d="M19 8a7 7 0 0 1-11 9z" />
              </Svg>
            </span>
          </span>
        </Th>
        <Th>Parent &amp; Link</Th>
        <Th>In</Th>
        <Th>Out</Th>
        <Th>Duration</Th>
        <Th>Stretch</Th>
        <Th />
      </tr>
    </thead>
    <tbody>
      <tr>
        <td colSpan={14} className="h-2 border-b-2 border-[#1d1d1d] p-0" />
      </tr>
      {rows.map((r, i) => {
        if (r.kind === "layer") return <LayerRow key={i} r={r} />;
        if (r.kind === "group") return <GroupRow key={i} r={r} />;
        if (r.kind === "prop") return <PropRow key={i} r={r} />;
        return <WaveRow key={i} />;
      })}
    </tbody>
  </table>
);

/* ---------- time graph ---------- */

const TrackRow = ({ r }: { r: Row }) => {
  if (r.kind === "wave")
    return (
      <div className="h-[136px] shrink-0 border-b-2 border-[#1d1d1d]">
        <div className="mr-10 ml-[14px] h-[132px] bg-[#333333]">
          <svg width="140" height="132" className="relative" style={{ left: r.x - 14 }} fill="#cbcbc9" aria-hidden="true">
            <path d={steps(r.top, r.end, 64)} />
            <path d={steps(r.bottom, r.end, 132)} />
          </svg>
        </div>
      </div>
    );
  if (r.kind === "layer")
    return (
      <div className="relative h-[34px] shrink-0 border-b-2 border-[#1d1d1d] bg-[#2f2f2f]">
        <div className="mr-10 ml-[14px] h-8 bg-[#3b3d3b]" />
        <div
          className="absolute top-0 h-8 pt-[2px]"
          style={{ left: r.bar.x, width: r.bar.w ?? `calc(100% - ${r.bar.x}px)`, background: r.bar.color }}
        >
          {r.bar.corner && (
            <div className={`h-7 bg-[#45443f] ${r.bar.w ? "mx-[2px]" : "ml-[2px]"}`}>
              <div className={`h-7 ${r.bar.w ? "rounded-t-xl" : "rounded-tl-xl"}`} style={{ background: r.bar.color }} />
            </div>
          )}
          <div className="absolute inset-x-0 bottom-0 h-[2px] bg-black/15" />
        </div>
        {r.marker && (
          <>
            <span className="absolute top-[2px] left-[256px] flex h-[26px] w-[74px] items-center justify-center rounded-sm border-2 border-[#222] bg-[#b9bbb0] text-[19px] leading-5 text-black">
              {r.marker}
            </span>
            <svg width="22" height="20" className="absolute top-[14px] left-[246px]" aria-hidden="true">
              <path d="M1 20v-10L11 1l10 9v10z" fill="#b0b0b0" stroke="#151515" strokeWidth="2" />
            </svg>
          </>
        )}
      </div>
    );
  const blank = r.kind === "group" && !r.reset;
  return (
    <div className="relative h-[34px] shrink-0 border-b-2 border-[#1d1d1d]">
      <div className={`mr-10 ml-[14px] h-8 ${blank ? "" : "bg-[#333333]"}`} />
      {r.kind === "group" && r.reset && (
        <svg width="14" height="22" className="absolute top-[6px] left-[80px]" aria-hidden="true">
          <path d="M0 1h14M0 21h14" stroke="#b4b4b4" strokeWidth="2" />
          <path d="M4 0h6v22H4z" fill="#b4b4b4" />
        </svg>
      )}
      {r.kind === "prop" && r.keys.map((k, i) => <Keyframe key={i} k={k} />)}
    </div>
  );
};

const ticks = ["0:00s", "02s", "04s", "06s", "08s", "10s", "12s", "14s"];

const TimeGraph = () => (
  <section className="relative flex w-[746px] shrink-0 flex-col overflow-hidden">
    {/* navigator */}
    <div className="mt-2 flex h-[22px] shrink-0 items-center rounded-t-xl bg-[#212121]">
      <span className="h-[17px] w-3 rounded-l-full bg-[#4a8ee8]" />
      <span className="flex h-5 w-[64px] border-2 border-black bg-[#636363] pl-[6px]">
        <i className="h-full w-[2px] bg-[#4a8ee8]" />
      </span>
      <span className="h-[17px] w-3 rounded-r-full bg-[#4a8ee8]" />
    </div>
    {/* ruler */}
    <div className="flex h-[38px] shrink-0 text-[20px] leading-[30px] text-[#9a9a9a]">
      {ticks.map((t, i) => (
        <div key={t} className={`flex w-[104px] shrink-0 flex-col items-center justify-between ${i === 0 ? "-ml-[37px]" : ""}`}>
          {t}
          <i className="h-2 w-[2px] shrink-0 bg-[#8f8f8f]" />
        </div>
      ))}
    </div>
    {/* work area */}
    <div className="flex h-[34px] shrink-0 border-y-2 border-black bg-[#212121] pl-[2px]">
      <span className="mr-[2px] h-full w-[10px] rounded-l-lg bg-[#4a8ee8]" />
      <span className="h-full w-[692px] border-t-2 border-[#6e6e6e] bg-[#606060]" />
      <span className="ml-[2px] h-full w-[10px] rounded-r-lg bg-[#4a8ee8]" />
    </div>
    <div className="mr-10 ml-[14px] h-[6px] shrink-0 bg-[#59bd41]" />
    <div className="h-[2px] shrink-0 bg-[#1d1d1d]" />
    <div className="flex flex-col border-l-2 border-black">
      <div className="-ml-[2px] flex flex-col">
        <div className="h-2 shrink-0 border-b-2 border-[#1d1d1d]">
          <svg width="692" height="6" className="ml-[14px] bg-[#333333]" fill="#cbcbc9" aria-hidden="true">
            <path d="M504 0h90v2h30v2H500V2h4z" />
          </svg>
        </div>
        {rows.map((r, i) => (
          <TrackRow key={i} r={r} />
        ))}
      </div>
    </div>
    {/* current time */}
    <div className="absolute top-10 bottom-0 left-[76px] flex w-[22px] flex-col items-center">
      <svg width="22" height="26" className="shrink-0" aria-hidden="true">
        <path d="M0 0h22v12l-8 14H8L0 12z" fill="#4a8ee8" />
        <path d="M11 13v13" stroke="#1b1b1b" strokeWidth="2" />
      </svg>
      <i className="w-[2px] grow bg-[#4a8ee8]" />
    </div>
  </section>
);

const SideBar = () => (
  <aside className="flex w-[34px] shrink-0 flex-col items-center text-[#b4b4b4]">
    <span className="mt-[74px]">
      <Svg w={22} h={28} box="0 0 22 28">
        <path d="M0 0h22v17L11 28 0 17z" />
      </Svg>
    </span>
    <span className="mt-[12px] mb-[3px]">
      <Svg w={28} h={26} box="0 0 28 26">
        <path d="M15 5h13v14H17z" />
        <path d="M1 17L14 1v15" fill="none" stroke="currentColor" strokeWidth="2" />
        <circle cx="13" cy="18" r="6" fill="#262626" stroke="currentColor" strokeWidth="2.500" />
      </Svg>
    </span>
    <div className="flex w-full grow flex-col items-center bg-[#1b1b1b] pt-[663px]">
      <div className="h-[228px] w-[30px] rounded-full bg-[#303030]" />
    </div>
  </aside>
);

/* ---------- panel pieces ---------- */

const Tabs = () => (
  <div className="flex h-[54px] shrink-0 items-start gap-[70px] pl-5 text-[21px] text-[#9b9b9b]">
    <div className="flex h-[50px] items-center border-b-4 border-[#b9bbb0] text-[#d0d0c8]">
      <button aria-label="Close tab" className="mr-5 text-[#8a8a8a]">
        <Svg w={10}>
          <path d="M2 2l20 20M22 2L2 22" stroke="currentColor" strokeWidth="3" />
        </Svg>
      </button>
      <span className="mr-[22px] mb-1 h-5 w-5 bg-[#9c9570]" />
      <button className="mt-1 mr-4">burger super morphing copy</button>
      <button aria-label="Panel menu">
        <Bars />
      </button>
    </div>
    <div className="flex h-[46px] items-center">
      <span className="mr-[22px] mb-1 h-5 w-5 bg-[#9c9570]" />
      <button className="mt-1">Bread Comp 1</button>
    </div>
  </div>
);

const TimeHeader = () => (
  <div className="flex h-[70px] shrink-0 items-center">
    <div className="w-[198px] shrink-0 pl-5">
      <div className="pl-1 text-[30px] leading-[38px] font-semibold text-[#519ef2]">0:00:01:09</div>
      <div className="text-[20px] leading-[20px] text-[#3f72ac]">00033 (24.00 fps)</div>
    </div>
    <label className="flex h-[38px] grow items-center rounded-md border-2 border-[#303030] bg-[#141414] pl-3 text-[#b4b4b4]">
      <Magnifier w={24} />
      <Svg w={12} h={6} box="0 0 12 6">
        <path d="M0 0h12L6 6z" />
      </Svg>
      <input aria-label="Search layers" className="w-full bg-transparent pl-2 outline-none" />
    </label>
    <div className="flex items-center pr-8 pl-[30px] text-[#b4b4b4]">
      <button aria-label="Composition mini-flowchart" className="mr-8">
        <Svg w={36} h={30} box="0 0 36 30">
          <path d="M0 7h30M17 7v14h4" fill="none" stroke="currentColor" strokeWidth="2" />
          <path d="M4 4h9v7H4zM21 4h9v7h-9zM21 16h9v8h-9zM24 26h10l-5 4z" />
        </Svg>
      </button>
      <button aria-label="Hide shy layers" className="mr-[20px]">
        <Svg w={32} h={30} box="0 0 32 30">
          <path d="M0 15h32v12H0z" fill="#45484a" />
          <path fillRule="evenodd" d="M16 2c5 0 8 3 8 7l2-1 2 6-10 1v7a2 2 0 0 1-4 0v-7L4 14l2-6 2 1c0-4 3-7 8-7zM12.500 8a2 2.500 0 1 0 0 5 2 2.500 0 0 0 0-5zm7 0a2 2.500 0 1 0 0 5 2 2.500 0 0 0 0-5z" />
        </Svg>
      </button>
      <button aria-label="Frame blending" className="mr-[22px]">
        <Film w={30} />
      </button>
      <button aria-label="Motion blur" className="mr-[38px]">
        <Motion w={30} />
      </button>
      <button aria-label="Graph editor">
        <Svg w={34} h={30} box="0 0 34 30">
          <path d="M3 4h29v25H3z" fill="none" stroke="currentColor" strokeWidth="2" />
          <path d="M7 9c10 0 9 14 20 15" fill="none" stroke="currentColor" strokeWidth="2" />
          <path d="M6 0v4M13 0v4M20 0v4M27 0v4M0 8h3M0 15h3M0 22h3" stroke="currentColor" strokeWidth="2" />
        </Svg>
      </button>
    </div>
  </div>
);

const Footer = () => (
  <footer className="flex h-[34px] shrink-0">
    <div className="flex grow items-center border-t-2 border-black pb-[2px] pl-3 text-[21px] text-[#a3a3a3]">
      <button aria-label="Layer switches pane" className="mr-[14px] text-[#4a8ee8]">
        <Svg w={24}>
          <path d="M2 14V2h10M6 18V6h10M9 9h13v13H9z" fill="none" stroke="currentColor" strokeWidth="2" />
          <path d="M14 14h4v5h-4z" />
        </Svg>
      </button>
      <button aria-label="Transfer controls pane" className="mr-[14px] text-[#4a8ee8]">
        <Svg w={24}>
          <circle cx="9" cy="9" r="7.500" fill="none" stroke="currentColor" strokeWidth="2" />
          <path d="M11 11h11v11H11z" fill="none" stroke="currentColor" strokeWidth="2" />
          <path d="M11 11h5.500l-5.500 5.500z" />
        </Svg>
      </button>
      <button aria-label="In and out panes" className="mr-[14px] text-[#4a8ee8]">
        <Svg w={24}>
          <path d="M4 1h4v22H4v-6l-3-5 3-5zM20 1h-4v22h4v-6l3-5-3-5z" />
          <path d="M8 1h8v22H8z" fill="#2a4468" />
        </Svg>
      </button>
      <button aria-label="Render time pane" className="mr-[54px] text-[#b4b4b4]">
        <Svg w={26}>
          <circle cx="9" cy="9" r="8" />
          <path d="M1 21q6-2 8-5l8 2 3-11 2 1-1 10q0 4-5 4z" />
          <circle cx="18" cy="5" r="1.500" />
          <circle cx="23" cy="6" r="1.500" />
        </Svg>
      </button>
      <span>Frame Render Time:</span>
      <span className="ml-[14px] text-[#6b6b6b]">798ms</span>
    </div>
    <div className="flex w-[214px] shrink-0 items-center border-t-2 border-black pl-[10px] text-[#b4b4b4]">
      <Svg w={20} h={10} box="0 0 20 10">
        <path d="M0 10l5-6 2 3 6-7 7 10z" />
      </Svg>
      <input
        type="range"
        aria-label="Timeline zoom"
        defaultValue={100}
        className="mx-[26px] h-1 w-[94px] appearance-none bg-[#3d3d3d] [&::-webkit-slider-thumb]:h-5 [&::-webkit-slider-thumb]:w-5 [&::-webkit-slider-thumb]:appearance-none [&::-webkit-slider-thumb]:rounded-full [&::-webkit-slider-thumb]:border-4 [&::-webkit-slider-thumb]:border-[#8f8f8f] [&::-webkit-slider-thumb]:bg-[#222]"
      />
      <Svg w={34} h={14} box="0 0 34 14">
        <path d="M0 14L9 3l4 3-5 8zM10 14L21 0l13 14z" />
      </Svg>
    </div>
    <div className="flex w-[534px] shrink-0 items-center bg-[#1b1b1b] pl-[2px]">
      <div className="h-[30px] w-[50px] rounded-full bg-[#303030]" />
    </div>
    <div className="w-8 shrink-0" />
  </footer>
);

export default function App() {
  return (
    <div className="relative flex h-screen flex-col overflow-hidden bg-[#171717] font-['Noto_Sans',sans-serif]">
      <header className="relative flex h-[42px] shrink-0 items-center justify-center rounded-t-xl border-t-2 border-b-2 border-t-[#e4e4e2] border-b-black bg-[#cbcbc9]">
        <h1 className="font-['Inter',sans-serif] text-[22px] text-[#3d3d3d]">
          Adobe After Effects 2024 - /Applications/Render/F ... er-Super Morphings- Anas - Folder Collect Files/Super Morphings- Anas.aep
        </h1>
        <div className="absolute right-2 flex gap-3">
          <button aria-label="Zoom window" className="h-[18px] w-[18px] rounded-full bg-[#5bc043]" />
          <button aria-label="Minimize window" className="h-[18px] w-[18px] rounded-full bg-[#e8cb5a]" />
          <button aria-label="Close window" className="h-[18px] w-[18px] rounded-full bg-[#d9503f]" />
        </div>
      </header>
      <Toolbar />
      <main className="mt-1 mb-1 ml-1 flex min-h-0 grow flex-col rounded-b-lg border-2 border-[#4a8ee8] bg-[#252525]">
        <Tabs />
        <div className="flex min-h-0 grow overflow-hidden">
          <div className="flex min-w-0 grow flex-col overflow-hidden">
            <TimeHeader />
            <LayerTable />
          </div>
          <TimeGraph />
          <SideBar />
        </div>
        <Footer />
      </main>
      {/* watermark */}
      <div className="pointer-events-none absolute inset-x-0 bottom-[40px] flex flex-col items-center text-white/30">
        <span dir="rtl" className="font-['DejaVu_Sans',sans-serif] text-[97px] leading-[74px] font-bold">
          مستقل
        </span>
        <span className="text-[55px] leading-[60px] font-semibold">mostaql.com</span>
      </div>
    </div>
  );
}
